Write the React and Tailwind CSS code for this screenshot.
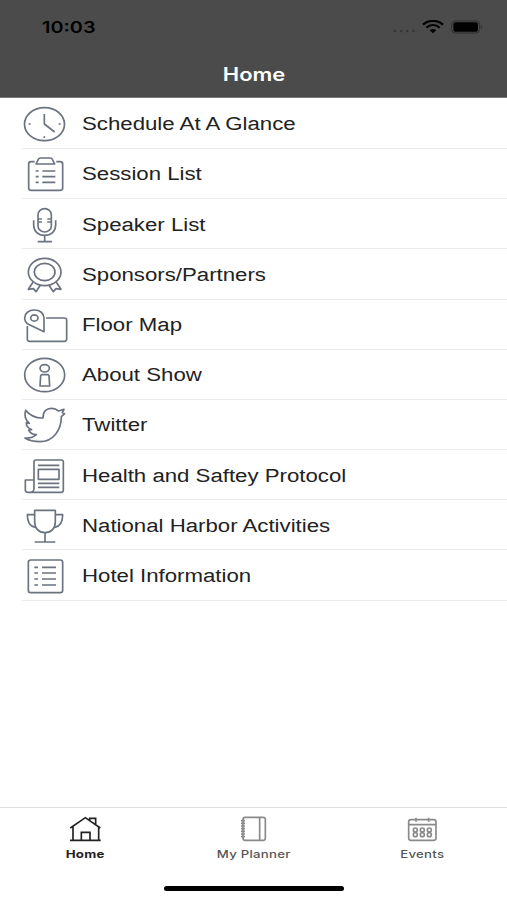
const ClockIcon = () => (
  <>
    <ellipse cx="67.5" cy="75.5" rx="60" ry="49.5" />
    <path d="M67 45V75L98 99M20 75H26M110 75H116M67 112V117" />
  </>
);

const ClipboardIcon = () => (
  <>
    <path d="M38 38H28Q20 38 20 45V117Q20 124 28 124H114Q122 124 122 117V45Q122 38 114 38H103" />
    <path d="M42 45L49 31Q50 27 56 27H84Q90 27 91 31L98 45Z" />
    <path d="M41 66H50M41 83H50M41 100H50M61 66H100M61 83H100M61 100H100" />
  </>
);

const MicIcon = () => (
  <>
    <rect x="48" y="26" width="40" height="70" rx="20" ry="18" />
    <path d="M35 61V75C35 94 49 106 68 106S101 94 101 75V61M68 106V124M47 125H90" />
    <path d="M49 57H60M49 66H60M76 57H87M76 66H87" />
  </>
);

const RibbonIcon = () => (
  <>
    <ellipse cx="68" cy="66" rx="49" ry="41" />
    <ellipse cx="68" cy="66" rx="31" ry="26" />
    <path d="M33 97L19 118L34 116L42 125L55 106M103 97L117 118L102 116L94 125L81 106" />
  </>
);

const MapIcon = () => (
  <>
    <path d="M16 78V118Q16 124 23 124H127Q134 124 134 118V60Q134 54 127 54H72" />
    <path d="M66 95V54C66 40 54 30 37 30S8 40 8 54C8 62 12 69 19 73Z" />
    <ellipse cx="37" cy="54" rx="11" ry="9.5" />
  </>
);

const InfoIcon = () => (
  <>
    <ellipse cx="68" cy="75" rx="60" ry="50" />
    <ellipse cx="68" cy="55" rx="14" ry="11" />
    <path d="M60 74H77Q80 74 81 77L83 108H54L56 77Q57 74 60 74Z" />
  </>
);

const BirdIcon = () => (
  <path d="M11 31C24 46 42 55 63 54C63 34 74 25 88 25C97 25 104 28 109 33L126 28L121 38L128 41L118 50C118 92 92 125 54 125C36 125 20 121 9 114C22 115 34 112 43 104C31 103 23 99 20 90L29 89C17 84 12 77 13 68L22 70C10 60 7 44 11 31Z" />
);

const NewsIcon = () => (
  <>
    <path d="M36 112V32Q36 27 42 27H118Q124 27 124 32V118Q124 124 117 124H18Q10 124 10 117V87H36V112Q36 124 25 124" />
    <rect x="49" y="55" width="62" height="30" />
    <path d="M48 43H112M48 97H112M48 109H112" />
  </>
);

const TrophyIcon = () => (
  <>
    <path d="M38 28H100V62C100 82 88 95 69 95S38 82 38 62Z" />
    <path d="M37 41H16C16 61 22 76 40 79M101 41H122C122 61 116 76 98 79M69 95V123M38 123H100" />
  </>
);

const ListIcon = () => (
  <>
    <rect x="19" y="27" width="103" height="98" rx="7" />
    <path d="M37 49H48M37 66H48M37 84H48M37 102H48M60 49H102M60 66H102M60 84H102M60 102H102" />
  </>
);

const menuItems = [
  { label: "Schedule At A Glance", icon: ClockIcon },
  { label: "Session List", icon: ClipboardIcon },
  { label: "Speaker List", icon: MicIcon },
  { label: "Sponsors/Partners", icon: RibbonIcon },
  { label: "Floor Map", icon: MapIcon },
  { label: "About Show", icon: InfoIcon },
  { label: "Twitter", icon: BirdIcon },
  { label: "Health and Saftey Protocol", icon: NewsIcon },
  { label: "National Harbor Activities", icon: TrophyIcon },
  { label: "Hotel Information", icon: ListIcon },
];

const HomeIcon = () => (
  <path d="M4 36L49 5L94 36M12 32V73M89 32V73M3 73H95M37 73V49H63V73M62 12V7H80V24" />
);

const PlannerIcon = () => (
  <>
    <rect x="15" y="4" width="67" height="69" rx="6" />
    <path d="M65 4V73" />
    <path d="M9 14H21M9 22H21M9 30H21M9 38H21M9 46H21M9 54H21M9 62H21" />
  </>
);

const CalendarIcon = () => (
  <>
    <rect x="8" y="11" width="82" height="62" rx="7" />
    <path d="M8 26H90M30 5V17M68 5V17" />
    {[28, 49, 70].map((x) => (
      <g key={x}>
        <circle cx={x} cy="42" r="6" />
        <circle cx={x} cy="56" r="6" />
      </g>
    ))}
  </>
);

const tabs = [
  { label: "Home", icon: HomeIcon, active: true },
  { label: "My Planner", icon: PlannerIcon },
  { label: "Events", icon: CalendarIcon },
];

function StatusBar() {
  return (
    <div className="flex h-[54px] items-center justify-between pl-[42px] pr-[23px] text-black">
      <span className="origin-left scale-x-[1.24] text-[16px] font-semibold leading-5">
        10:03
      </span>
      <div className="flex items-center">
        <svg className="mt-2 h-1 w-6" viewBox="0 0 24 4" fill="#363636">
          <circle cx="2" cy="2" r="1.3" />
          <circle cx="8.3" cy="2" r="1.3" />
          <circle cx="14.3" cy="2" r="1.3" />
          <circle cx="20.5" cy="2" r="1.3" />
        </svg>
        <svg className="ml-[5px] h-[14px] w-[22px]" viewBox="0 0 66 42" fill="none" stroke="#000">
          <path d="M3 14C20 -1 46 -1 63 14" strokeWidth="7" />
          <path d="M13 23C25 13 41 13 53 23" strokeWidth="7" />
          <path d="M23 31Q33 23 43 31L33 40Z" fill="#000" stroke="none" />
        </svg>
        <svg className="ml-[7px] h-[14px] w-[33px]" viewBox="0 0 99 42">
          <rect x="2" y="3" width="84" height="36" rx="10" fill="none" stroke="#2e2e2e" strokeWidth="3" />
          <rect x="7" y="7" width="74" height="28" rx="6" />
          <path d="M91 15Q97 21 91 27Z" fill="#2e2e2e" />
        </svg>
      </div>
    </div>
  );
}

function MenuRow({ label, icon: Icon }) {
  return (
    <li className="ml-[22px] flex h-[50.2px] items-center border-b border-[#ebebed] pt-[1.6px]">
      <svg
        className="h-[50px] w-[46px] shrink-0"
        viewBox="0 0 138 150"
        fill="none"
        stroke="#6b7380"
        strokeWidth="5"
        strokeLinejoin="round"
      >
        <Icon />
      </svg>
      <span className="ml-[14px] origin-left scale-x-[1.234] whitespace-nowrap text-[18px] leading-6 text-[#222222]">
        {label}
      </span>
    </li>
  );
}

function TabItem({ label, icon: Icon, active }) {
  return (
    <button
      type="button"
      className={[
        "flex flex-1 flex-col items-center pt-2",
        active ? "font-bold text-[#222222]" : "font-medium text-[#555555]",
      ].join(" ")}
    >
      <svg
        className="h-[26px] w-[33px]"
        viewBox="0 0 99 78"
        fill="none"
        stroke={active ? "#222222" : "#8a8a8a"}
        strokeWidth="5"
      >
        <Icon />
      </svg>
      <span className="mt-[5px] scale-x-[1.2] whitespace-nowrap text-[11px] leading-[14px] tracking-[0.2px]">
        {label}
      </span>
    </button>
  );
}

export default function App() {
  return (
    <div className="flex h-[900px] w-[507px] flex-col overflow-hidden bg-white font-['Inter',sans-serif]">
      <header className="h-[98px] border-b border-[#777777] bg-[#4b4b4b]">
        <StatusBar />
        <h1 className="flex h-10 scale-x-[1.22] items-center justify-center pl-px text-[18px] font-semibold text-white">
          Home
        </h1>
      </header>

      <ul className="flex-1 pt-[0.8px] font-['Liberation_Sans',sans-serif]">
        {menuItems.map((item) => (
          <MenuRow key={item.label} {...item} />
        ))}
      </ul>

      <footer className="flex h-[93px] flex-col border-t border-[#dedede]">
        <nav className="flex flex-1 pl-px">
          {tabs.map((tab) => (
            <TabItem key={tab.label} {...tab} />
          ))}
        </nav>
        <div className="mx-auto mb-[9px] h-[5px] w-[180px] rounded-full bg-black" />
      </footer>
    </div>
  );
}
